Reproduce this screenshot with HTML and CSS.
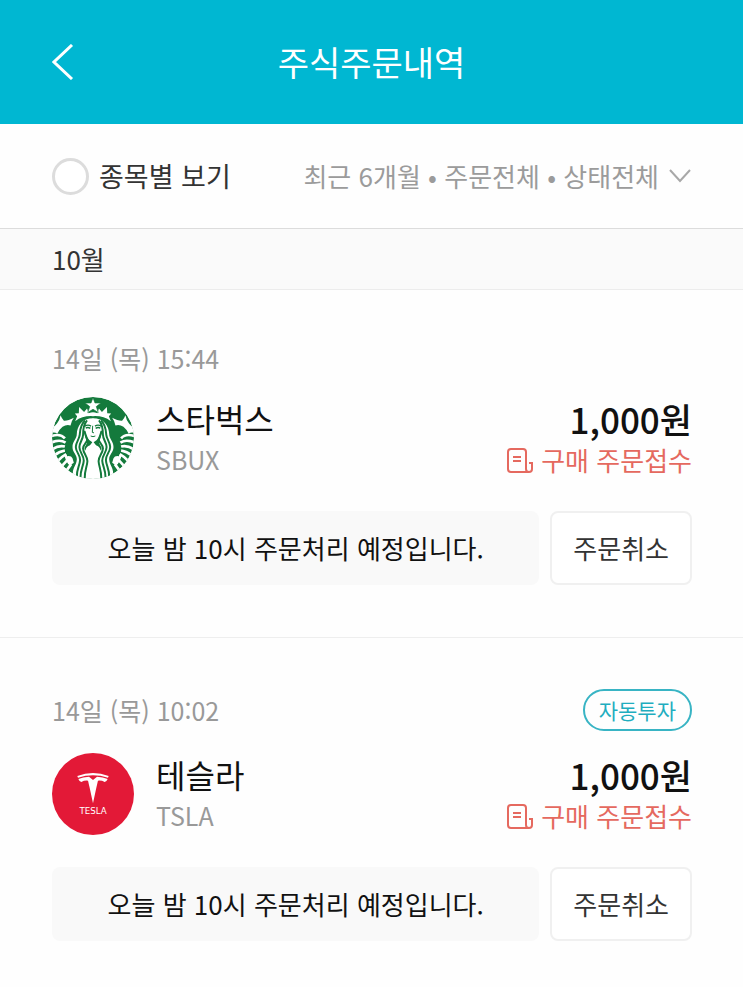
FILE: index.html
```html
<!DOCTYPE html>
<html lang="ko">
  <head>
    <meta charset="UTF-8" />
    <meta name="viewport" content="width=device-width, initial-scale=1.0" />
    <title>주식주문내역</title>
    <link rel="stylesheet" href="styles.css" />
  </head>
  <body>
    <header class="header">
      <button class="back-button" type="button" aria-label="뒤로">
        <svg width="22" height="36" viewBox="0 0 22 36" fill="none" stroke="#fff" stroke-width="3">
          <path d="M20 1 2 18l18 17" />
        </svg>
      </button>
      <h1>주식주문내역</h1>
    </header>

    <div class="filter-bar">
      <label class="group-toggle">
        <input type="checkbox" />
        종목별 보기
      </label>
      <button class="filter-button" type="button" aria-haspopup="true">
        최근 6개월 • 주문전체 • 상태전체
        <svg width="22" height="14" viewBox="0 0 22 14" fill="none" stroke="#a8a8a8" stroke-width="2">
          <path d="M1 1l10 11L21 1" />
        </svg>
      </button>
    </div>

    <main>
      <h2 class="month">10월</h2>

      <section class="order">
        <div class="order-top">
          <time class="order-date">14일 (목) 15:44</time>
        </div>
        <div class="order-main">
          <svg class="logo" viewBox="35 35 248 248" role="img" aria-label="스타벅스">
            <defs>
              <clipPath id="siren"><circle cx="159" cy="159" r="124" /></clipPath>
              <g id="siren-half">
                <!-- crown -->
                <path fill="#fff" d="M105 108l6-15-7-8 12-1 1-19 15 15 9-10 5 14q7-3 13-3v12q-31-2-54 15z" />
                <!-- tail -->
                <path fill="#fff" d="M61 90q4 11 10 17 12 1 30-9-8 11-10 23-12-4-24 4-10 8-16 21-10-8-22 0V128q14-2 21-13 8-9 11-25z" />
                <g fill="none" stroke="#fff" stroke-width="8">
                  <path d="M28 155q32-12 46 5M30 174q28-13 46-1M34 194q22-14 40-9M42 212q14-12 32-15M52 229q10-12 26-21M64 245l20-22M77 260l16-22" />
                </g>
                <path fill="#fff" d="M72 209q8-3 9 5 12-2 16 6l4 14-12 8q-12-8-17-33z" />
                <!-- hair -->
                <path fill="#fff" d="M160 99c-34 0-49 23-50 48 0 14-13 23-13 39 0 17 14 23 13 38-1 17-12 24-12 42l2 30h60z" />
                <g fill="none" stroke="#147a3c" stroke-width="6">
                  <path d="M135 106c-15 13-15 29-16 43-1 13-12 23-12 37 0 16 14 24 13 40-1 17-11 26-10 52" />
                  <path d="M141 106c-12 14-12 29-12 43 0 14-12 25-11 38 0 16 14 25 13 41-1 17-11 26-10 55" />
                  <path d="M133 138c3 12 7 19 9 26-1 9-14 16-13 27 1 16 14 23 13 39-1 17-9 25-8 55" />
                </g>
                <path fill="#147a3c" d="M134 133q3 28 23 39l-7 9q-11 3-14 16-6-6 1-15 6-8 3-15-8-14-6-34z" />
                <path fill="none" stroke="#147a3c" stroke-width="4" d="M134 123q10-6 19 0M137 129q7-4 14 1" />
              </g>
            </defs>
            <g clip-path="url(#siren)">
              <circle cx="159" cy="159" r="124" fill="#147a3c" />
              <use href="#siren-half" />
              <use href="#siren-half" transform="matrix(-1 0 0 1 318 0)" />
              <path fill="#fff" stroke="#147a3c" stroke-width="2" d="M159 37l6 16h18l-14 11 6 18-16-10-16 10 6-18-14-11h18z" />
              <path fill="none" stroke="#147a3c" stroke-width="3" d="M158 122l-1 20q2 3 5 0M152 153q7 4 14 0" />
            </g>
          </svg>
          <div class="stock">
            <h3>스타벅스</h3>
            <span class="ticker">SBUX</span>
          </div>
          <div class="amount">
            <strong>1,000원</strong>
            <span class="status">
              <svg width="26" height="28" viewBox="0 -2 26 28" fill="none" stroke="#e5695f" stroke-width="2">
                <path d="M22 24H4a3 3 0 0 1-3-3V4a3 3 0 0 1 3-3h12a3 3 0 0 1 3 3v17a3 3 0 0 0 6 0v-6h-3" />
                <path d="M6 9h8M6 13h8" />
              </svg>
              구매 주문접수
            </span>
          </div>
        </div>
        <div class="order-bottom">
          <p class="notice">오늘 밤 10시 주문처리 예정입니다.</p>
          <button class="cancel-button" type="button">주문취소</button>
        </div>
      </section>

      <section class="order">
        <div class="order-top">
          <time class="order-date">14일 (목) 10:02</time>
          <span class="badge">자동투자</span>
        </div>
        <div class="order-main">
          <svg class="logo" viewBox="36 27 246 246" role="img" aria-label="테슬라">
            <circle cx="159" cy="150" r="123" fill="#e31937" />
            <g fill="#fff">
              <path d="M112 96q47-18 94 0l-2 5q-45-14-90 0z" />
              <path d="M115 105q14-6 32-7l12 10 12-10q18 1 32 7-3 7-9 9-9-5-20-4-2 6-15 68-13-62-15-68-11-1-20 4-6-2-9-9z" />
              <text class="wordmark" x="159" y="211" text-anchor="middle">TESLA</text>
            </g>
          </svg>
          <div class="stock">
            <h3>테슬라</h3>
            <span class="ticker">TSLA</span>
          </div>
          <div class="amount">
            <strong>1,000원</strong>
            <span class="status">
              <svg width="26" height="28" viewBox="0 -2 26 28" fill="none" stroke="#e5695f" stroke-width="2">
                <path d="M22 24H4a3 3 0 0 1-3-3V4a3 3 0 0 1 3-3h12a3 3 0 0 1 3 3v17a3 3 0 0 0 6 0v-6h-3" />
                <path d="M6 9h8M6 13h8" />
              </svg>
              구매 주문접수
            </span>
          </div>
        </div>
        <div class="order-bottom">
          <p class="notice">오늘 밤 10시 주문처리 예정입니다.</p>
          <button class="cancel-button" type="button">주문취소</button>
        </div>
      </section>
    </main>
  </body>
</html>
```
FILE: styles.css
```css
* {
  box-sizing: border-box;
}

body {
  margin: 0;
  background-color: #fefefe;
  color: #111;
  font-family: "Noto Sans CJK KR", sans-serif;
  font-size: 26px;
  line-height: 36px;
}

h1,
h2,
h3,
p {
  margin: 0;
  font-weight: 400;
}

svg {
  display: block;
  flex: none;
}

button {
  padding: 0;
  border: none;
  background: none;
  font: inherit;
  cursor: pointer;
}

.header {
  display: grid;
  grid-template-columns: 22px 1fr 22px;
  align-items: center;
  height: 124px;
  padding: 0 52px;
  background-color: #00b7d2;
  color: #fff;
}

.header h1 {
  font-size: 34px;
  line-height: 48px;
  text-align: center;
}

.filter-bar {
  display: flex;
  align-items: center;
  justify-content: space-between;
  height: 105px;
  padding: 0 52px;
  border-bottom: 1px solid #dcdcdc;
}

.group-toggle {
  display: flex;
  align-items: center;
  gap: 10px;
  color: #333;
  font-size: 27px;
}

.group-toggle input {
  appearance: none;
  width: 37px;
  height: 37px;
  margin: 0;
  border: 3px solid #dcdcdc;
  border-radius: 50%;
  background-color: #fff;
}

.group-toggle input:checked {
  border-color: #00b7d2;
}

.filter-button {
  display: flex;
  align-items: center;
  gap: 10px;
  color: #9b9b9b;
}

.month {
  padding: 12px 52px;
  border-bottom: 1px solid #ececec;
  background-color: #fafafa;
  color: #333;
  font-size: 26px;
}

.order {
  padding: 51px 51px 52px 52px;
  border-bottom: 1px solid #eee;
}

.order:last-child {
  border-bottom: none;
  padding-bottom: 46px;
}

.order-top,
.order-main,
.order-bottom {
  display: flex;
  align-items: center;
}

.order-top {
  justify-content: space-between;
}

.order-date {
  color: #999;
  font-size: 25px;
  line-height: 34px;
}

.badge {
  padding: 0 14px;
  border: 2px solid #38b4c4;
  border-radius: 21px;
  color: #1fadbf;
  font-size: 21px;
  line-height: 38px;
}

.order-main {
  gap: 22px;
  margin-top: 22px;
}

.logo {
  width: 82px;
  height: 82px;
}

.wordmark {
  font-family: "DejaVu Sans", sans-serif;
  font-size: 26px;
}

.stock,
.amount {
  display: flex;
  flex-direction: column;
}

.stock h3 {
  font-size: 32px;
  line-height: 42px;
}

.ticker {
  color: #999;
  font-size: 25px;
  line-height: 40px;
}

.amount {
  align-items: flex-end;
  margin-left: auto;
}

.amount strong {
  font-size: 35px;
  font-weight: 500;
  line-height: 44px;
}

.status {
  display: flex;
  align-items: center;
  gap: 8px;
  color: #e5695f;
  line-height: 38px;
}

.order-bottom {
  gap: 11px;
  margin-top: 32px;
}

.notice {
  flex: 1;
  padding: 19px 0;
  border-radius: 8px;
  background-color: #f9f9f9;
  text-align: center;
}

.cancel-button {
  padding: 17px 21px;
  border: 2px solid #f0f0f0;
  border-radius: 8px;
  background-color: #fff;
  color: #333;
}
```
